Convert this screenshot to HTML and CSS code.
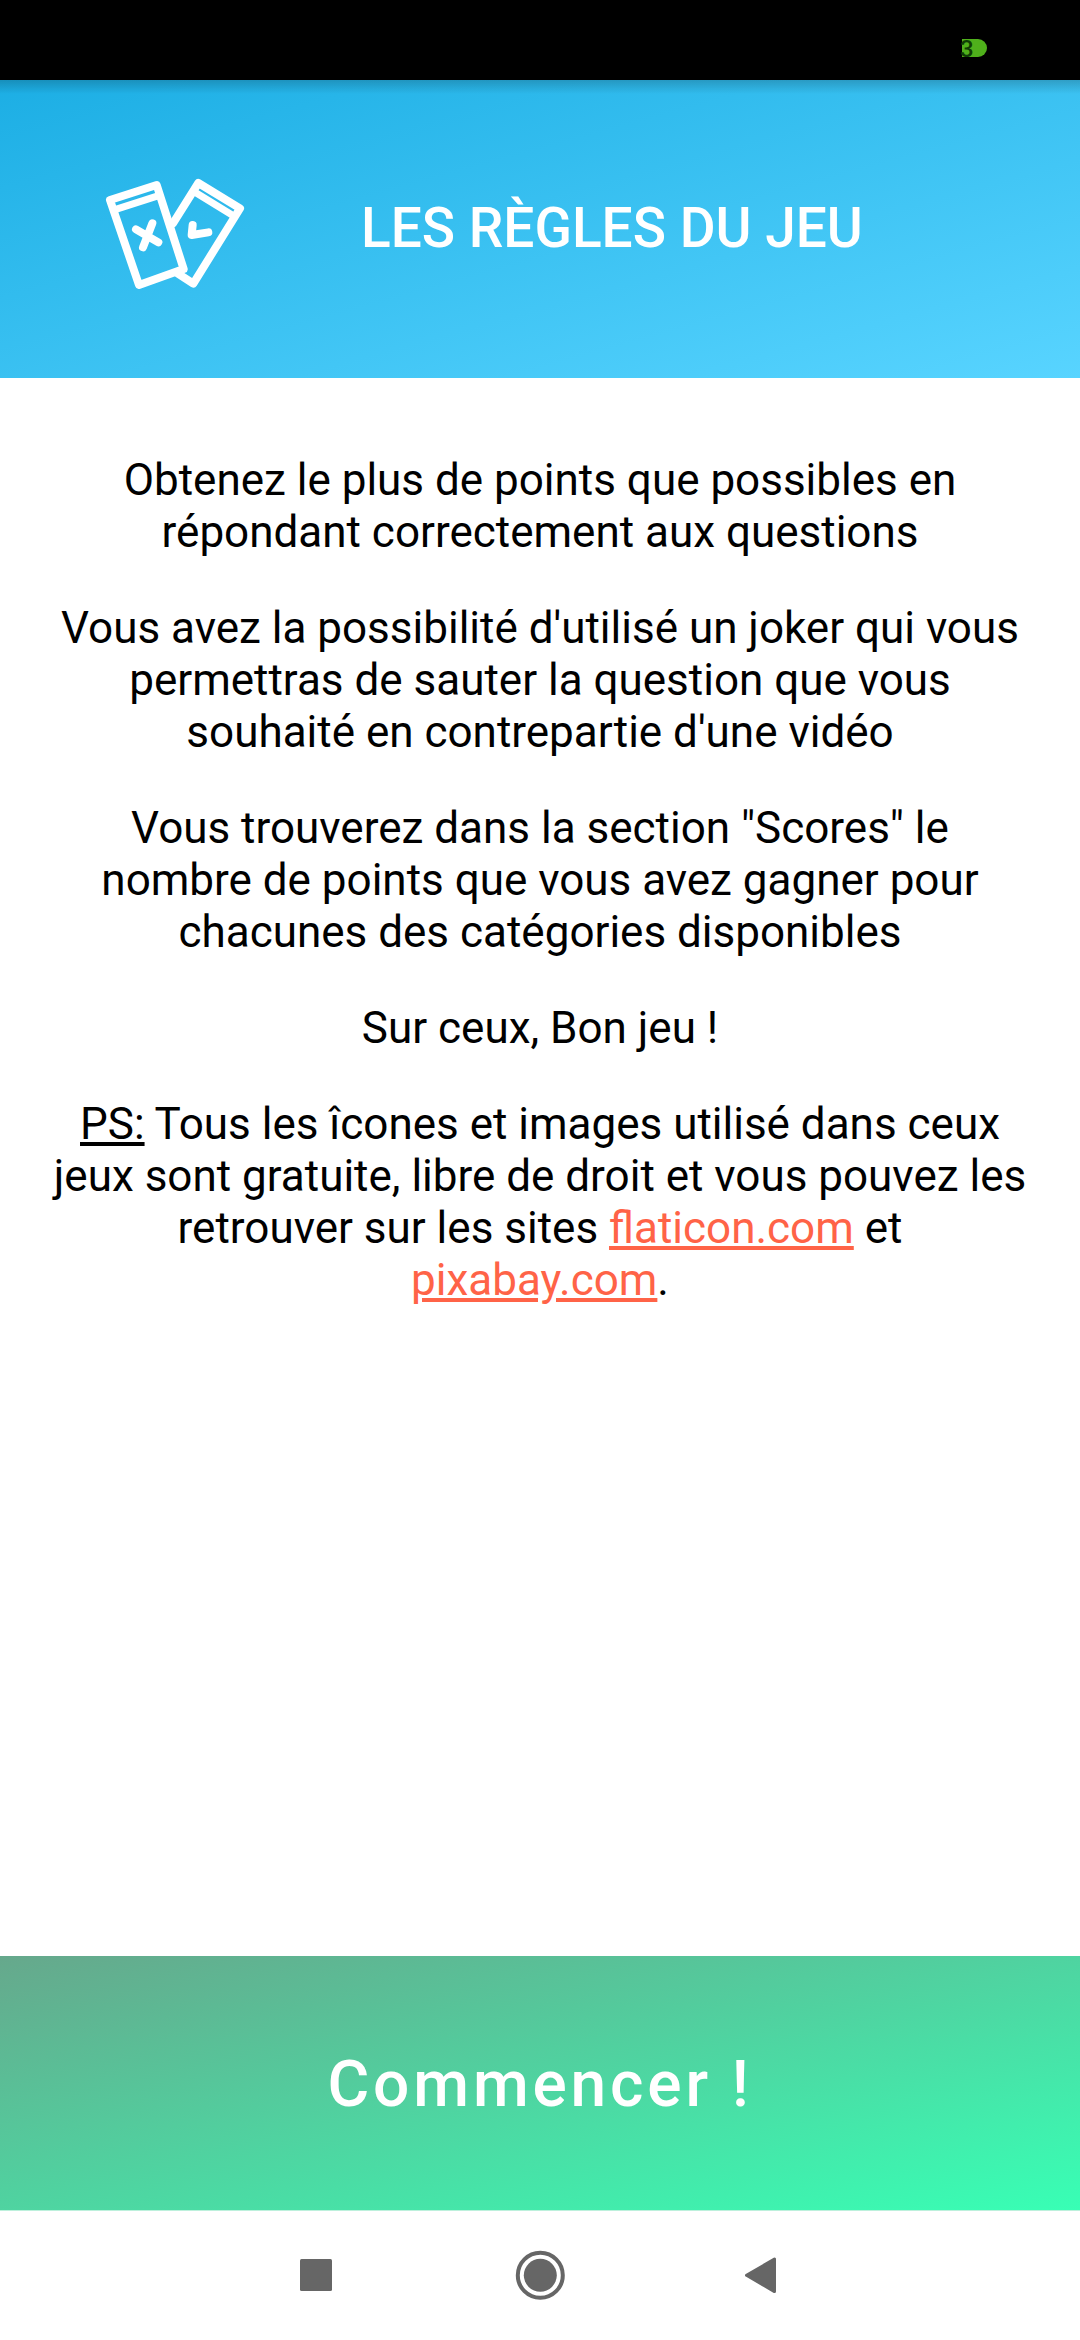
FILE: index.html
```html
<!DOCTYPE html>
<html lang="fr">
<head>
<meta charset="utf-8">
<title>Les règles du jeu</title>
<link rel="stylesheet" href="styles.css">
</head>
<body>
<div class="screen">
  <div class="status-bar"><div class="battery"><span class="battery-level">3</span></div></div>
  <header class="header">
    <svg class="logo" viewBox="0 0 510 450" fill="none" stroke="#fff" stroke-width="24" stroke-linecap="round" stroke-linejoin="round">
      <path d="M249 190L325 69L450 145L310 371L264 341"/>
      <path d="M314 96L430 167" stroke-width="21"/>
      <path d="M308 195L305 225L355 217"/>
      <path d="M60 120L200 75L281 327L147 375Z"/>
      <path d="M75 149L206 107" stroke-width="21"/>
      <path d="M138 208L205 247M187 190L159 262"/>
    </svg>
    <h1 class="title">LES RÈGLES DU JEU</h1>
  </header>
  <main class="rules">
    <p>Obtenez le plus de points que possibles en répondant correctement aux questions</p>
    <p>Vous avez la possibilité d'utilisé un joker qui vous permettras de sauter la question que vous souhaité en contrepartie d'une vidéo</p>
    <p>Vous trouverez dans la section "Scores" le nombre de points que vous avez gagner pour chacunes des catégories disponibles</p>
    <p>Sur ceux, Bon jeu !</p>
    <p><u>PS:</u> Tous les îcones et images utilisé dans ceux jeux sont gratuite, libre de droit et vous pouvez les retrouver sur les sites <a class="link" href="#">flaticon.com</a> et <a class="link" href="#">pixabay.com</a>.</p>
  </main>
  <button class="start">Commencer !</button>
  <nav class="nav-bar">
    <svg class="nav-icon" viewBox="0 0 48 48"><rect x="8" y="8" width="32" height="32" rx="1.5"/></svg>
    <svg class="nav-icon" viewBox="0 0 48 48"><circle cx="24.3" cy="24.3" r="16.5"/><circle cx="24.3" cy="24.3" r="22.5" class="ring"/></svg>
    <svg class="nav-icon" viewBox="0 0 48 48"><path d="M6.5 24.3L34.5 8V40.6Z" class="back"/></svg>
  </nav>
</div>
</body>
</html>
```
FILE: styles.css
```css
* { box-sizing: border-box; }

body {
  margin: 0;
  background: #fff;
  color: #000;
  font-family: Roboto, sans-serif;
}

.screen {
  width: 1080px;
  height: 2340px;
  display: flex;
  flex-direction: column;
}

.status-bar {
  height: 80px;
  padding: 39px 93px 0 0;
  display: flex;
  justify-content: flex-end;
  background: #000;
}

.battery {
  width: 25px;
  height: 18px;
  border-radius: 0 9px 9px 0;
  background: #4fb01b;
}

.battery-level {
  display: block;
  margin-left: -2px;
  color: #0f3d05;
  font-size: 24px;
  font-weight: 500;
  line-height: 20px;
}

.header {
  height: 298px;
  padding-left: 90px;
  display: flex;
  align-items: flex-start;
  background:
    linear-gradient(rgba(0, 0, 0, 0.18), transparent) 0 0 / 100% 14px no-repeat,
    linear-gradient(to bottom right, #1caee4, #58d4ff);
}

.logo {
  width: 170px;
  height: 150px;
  margin-top: 80px;
  overflow: visible;
}

.title {
  margin: 115px 0 0 101px;
  color: #fff;
  font-size: 55px;
  font-weight: 500;
  line-height: 66px;
  white-space: nowrap;
}

.rules {
  flex: 1;
  padding: 76px 51px 0;
  font-size: 44px;
  line-height: 52px;
  text-align: center;
}

.rules p { margin: 0 0 44px; }

.rules u,
.link {
  text-decoration-thickness: 4px;
  text-underline-offset: 3px;
}

.link { color: #ff6347; }

.start {
  height: 254px;
  padding: 3px 0 0;
  border: 0;
  background: linear-gradient(to bottom right, #66a88c, #38ffb5);
  color: #fff;
  font-family: inherit;
  font-size: 64px;
  font-weight: 500;
  letter-spacing: 3.85px;
}

.nav-bar {
  height: 130px;
  display: flex;
  align-items: center;
  justify-content: center;
  gap: 176px;
  box-shadow: inset 0 1px #bdf0dc;
}

.nav-icon {
  width: 48px;
  height: 48px;
  overflow: visible;
  fill: #666;
}

.ring {
  fill: none;
  stroke: #666;
  stroke-width: 4;
}

.back {
  stroke: #666;
  stroke-width: 3;
  stroke-linejoin: round;
}
```
